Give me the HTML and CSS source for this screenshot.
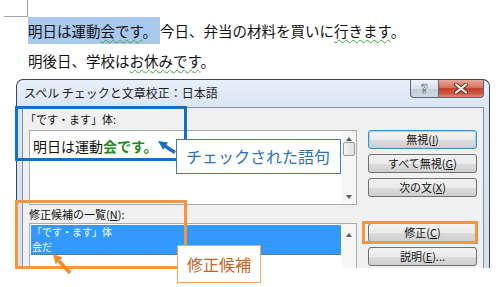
FILE: index.html
```html
<!DOCTYPE html>
<html lang="ja">
<head>
    <meta charset="UTF-8">
    <title>スペル チェックと文章校正</title>
    <link rel="stylesheet" href="styles.css">
</head>
<body>
    <div class="doc">
        <p class="line"><span class="sel">明日は運動<span class="wavy">会です</span>。</span>今日、弁当の材料を買いに<span class="wavy">行きます</span>。</p>
        <p class="line">明後日、学校は<span class="wavy">お休みです</span>。</p>
    </div>

    <div class="dialog">
        <div class="titlebar">
            <span class="title">スペル チェックと文章校正：日本語</span>
            <div class="caption-buttons">
                <span class="cap help">?</span>
                <span class="cap close">
                    <svg width="14" height="11" viewBox="0 0 14 11">
                        <path d="M2 1.5 L12 9.5 M12 1.5 L2 9.5" stroke="#6b2a20" stroke-width="4" stroke-linecap="round"/>
                        <path d="M2 1.5 L12 9.5 M12 1.5 L2 9.5" stroke="#fff" stroke-width="2.2" stroke-linecap="round"/>
                    </svg>
                </span>
            </div>
        </div>

        <div class="client">
            <div class="left">
                <div class="label label-first">「です・ます」体:</div>
                <div class="textbox">
                    <div class="textbox-text">明日は運動<b class="hit">会です。</b></div>
                    <div class="scrollbar">
                        <span class="sb-arrow"><span class="tri-up"></span></span>
                        <span class="sb-thumb"></span>
                        <span class="sb-space"></span>
                        <span class="sb-arrow sb-down"><span class="tri-down"></span></span>
                    </div>
                </div>
                <div class="label">修正候補の一覧(<u>N</u>):</div>
                <div class="listbox">
                    <div class="items">
                        <div class="selected">
                            <div class="item">「です・ます」体</div>
                            <div class="item">会だ</div>
                        </div>
                    </div>
                    <div class="scrollbar">
                        <span class="sb-arrow sb-arrow-list"><span class="tri-up"></span></span>
                    </div>
                </div>
            </div>

            <div class="right">
                <div class="btn-group">
                    <button class="btn focus">無視(<u>I</u>)</button>
                    <button class="btn">すべて無視(<u>G</u>)</button>
                    <button class="btn">次の文(<u>X</u>)</button>
                </div>
                <div class="btn-group btn-group-low">
                    <button class="btn">修正(<u>C</u>)</button>
                    <button class="btn">説明(<u>E</u>)...</button>
                </div>
            </div>
        </div>
    </div>

    <!-- annotation layer -->
    <svg class="marks" width="499" height="287" viewBox="0 0 499 287">
        <rect x="16.5" y="107.5" width="169" height="52" fill="none" stroke="#1670c2" stroke-width="3"/>
        <rect x="16.5" y="201.5" width="169" height="66" fill="none" stroke="#f29640" stroke-width="3"/>
        <rect x="363.5" y="222.5" width="113" height="20" fill="none" stroke="#f29640" stroke-width="3"/>
        <path d="M175 152.5 L164 145.5" stroke="#1670c2" stroke-width="3.5"/>
        <polygon points="158,141 168,142.6 163.2,149.8" fill="#1670c2"/>
        <path d="M70 273 L59 261" stroke="#ef8a2e" stroke-width="3.5"/>
        <polygon points="53,254 62.6,257.5 55.6,263.9" fill="#ef8a2e"/>
    </svg>

    <div class="callout callout-blue">チェックされた語句</div>
    <div class="callout callout-orange">修正候補</div>
</body>
</html>
```

FILE: styles.css
```css
:root {
    --frame-border: #3f4650;
    --client-bg: #f0f0f0;
    --field-border: #a5acb5;
    --select-bg: #3399ff;
    --note-blue: #2b70bd;
    --note-orange: #c46320;
}

body {
    margin: 0;
    width: 499px;
    height: 287px;
    overflow: hidden;
    position: relative;
    background: #fff;
    color: #111;
    font-family: "Noto Sans CJK JP", "Noto Sans", sans-serif;
}

/* word document behind the dialog */
.doc {
    position: relative;
    height: 63px;
    padding: 16px 0 0 28px;
    font-size: 14.5px;
    line-height: 30px;
}

.doc::before {
    content: '';
    position: absolute;
    left: 4px;
    top: 0;
    width: 23px;
    height: 16px;
    border-right: 1px solid #a6a6a6;
    border-bottom: 1px solid #a6a6a6;
}

.line {
    margin: 0;
    white-space: nowrap;
}

.sel {
    background: #a9c8ee;
    padding: 3px 3px 3px 0;
}

.wavy {
    text-decoration: underline wavy #43a047;
    text-decoration-thickness: 1px;
    text-underline-offset: 2px;
}

/* dialog window */
.dialog {
    margin-left: 16px;
    width: 474px;
    height: 189px;
    box-sizing: border-box;
    border: 1px solid var(--frame-border);
    border-bottom: 0;
    border-radius: 7px 7px 0 0;
    background: linear-gradient(#e8f0f9, #d9e5f3 30px, #d3e0ef);
    padding: 0 5px;
    display: flex;
    flex-direction: column;
}

.titlebar {
    height: 27px;
    flex-shrink: 0;
    display: flex;
    justify-content: space-between;
    align-items: flex-start;
}

.title {
    font-size: 12px;
    line-height: 26px;
    padding-left: 2px;
    color: #1b1b1b;
}

.caption-buttons {
    display: flex;
}

.cap {
    height: 18px;
    box-sizing: border-box;
    border: 1px solid #5c6672;
    border-top: 0;
    display: flex;
    align-items: center;
    justify-content: center;
}

.help {
    width: 28px;
    border-right: 0;
    border-radius: 0 0 0 4px;
    background: linear-gradient(#f0f4f9, #d8e0ea 50%, #c3ceda 51%, #ccd7e4);
    color: #fff;
    font-family: "DejaVu Sans", sans-serif;
    font-weight: bold;
    font-size: 12px;
    -webkit-text-stroke: 0.6px #46505c;
}

.close {
    width: 46px;
    border-radius: 0 0 4px 0;
    background: linear-gradient(#eaa99b, #d6705f 45%, #c3402c 50%, #cc5a44 80%, #e08a72);
}

.client {
    flex: 1;
    min-height: 0;
    overflow: hidden;
    background: var(--client-bg);
    border: 1px solid #8592a4;
    border-bottom: 0;
    padding-left: 6px;
    display: grid;
    grid-template-columns: 328px 109px;
    column-gap: 11px;
}

.left {
    display: flex;
    flex-direction: column;
}

.label {
    font-size: 11px;
    line-height: 18px;
    height: 18px;
    color: #111;
}

.label-first {
    height: 22px;
    line-height: 22px;
    margin-left: -4px;
}

.textbox {
    height: 75px;
    flex-shrink: 0;
    box-sizing: border-box;
    border: 1px solid var(--field-border);
    background: #fff;
    display: flex;
}

.textbox-text {
    flex: 1;
    font-size: 14px;
    line-height: 22px;
    padding: 4px 3px;
    white-space: nowrap;
}

.hit {
    color: #1e8a1e;
}

.scrollbar {
    width: 14px;
    display: flex;
    flex-direction: column;
    align-items: center;
    background: #f6f6f6;
}

.sb-arrow {
    height: 10px;
    width: 100%;
    display: flex;
    align-items: flex-end;
    justify-content: center;
}

.sb-down {
    height: 14px;
    align-items: center;
}

.sb-arrow-list {
    height: 13px;
}

.tri-up, .tri-down {
    width: 0;
    height: 0;
    border-left: 3.5px solid transparent;
    border-right: 3.5px solid transparent;
}

.tri-up {
    border-bottom: 4px solid #5a5a5a;
}

.tri-down {
    border-top: 4px solid #5a5a5a;
}

.sb-thumb {
    width: 12px;
    height: 14px;
    box-sizing: border-box;
    margin-top: 1px;
    border: 1px solid #9a9a9a;
    border-radius: 2px;
    background: linear-gradient(90deg, #f4f4f4, #e0e0e0);
}

.sb-space {
    flex: 1;
}

.listbox {
    flex: 1;
    box-sizing: border-box;
    border: 1px solid var(--field-border);
    border-bottom: 0;
    background: #fff;
    display: flex;
}

.items {
    flex: 1;
    padding: 1px 1px 0;
}

.selected {
    background: var(--select-bg);
    border-bottom: 1px dotted #8a5a2a;
}

.item {
    font-size: 10px;
    line-height: 14.5px;
    padding-left: 1px;
    color: #fff;
}

.right {
    display: flex;
    flex-direction: column;
    padding-top: 22px;
}

.btn-group {
    display: flex;
    flex-direction: column;
    gap: 5px;
}

.btn-group-low {
    margin-top: 26px;
}

.btn {
    height: 19px;
    box-sizing: border-box;
    margin: 0;
    padding: 0;
    border: 1px solid #707070;
    border-radius: 3px;
    background: linear-gradient(#f2f2f2, #ebebeb 50%, #dddddd 51%, #cfcfcf);
    font-family: inherit;
    font-size: 11px;
    line-height: 17px;
    color: #111;
    text-align: center;
}

.btn.focus {
    border-color: #3c8fc8;
    box-shadow: inset 0 0 0 1px #9fd8f6;
}

/* annotations drawn over the screenshot */
.marks {
    position: absolute;
    left: 0;
    top: 0;
}

.callout {
    position: absolute;
    box-sizing: border-box;
    background: #fff;
    font-size: 16px;
    padding-left: 9px;
    white-space: nowrap;
}

.callout-blue {
    left: 176px;
    top: 139px;
    width: 165px;
    height: 35px;
    line-height: 33px;
    border: 1px solid #3b7dc4;
    color: var(--note-blue);
}

.callout-orange {
    left: 177px;
    top: 245px;
    width: 84px;
    height: 38px;
    line-height: 36px;
    border: 1px solid #f3a462;
    color: var(--note-orange);
}
```
